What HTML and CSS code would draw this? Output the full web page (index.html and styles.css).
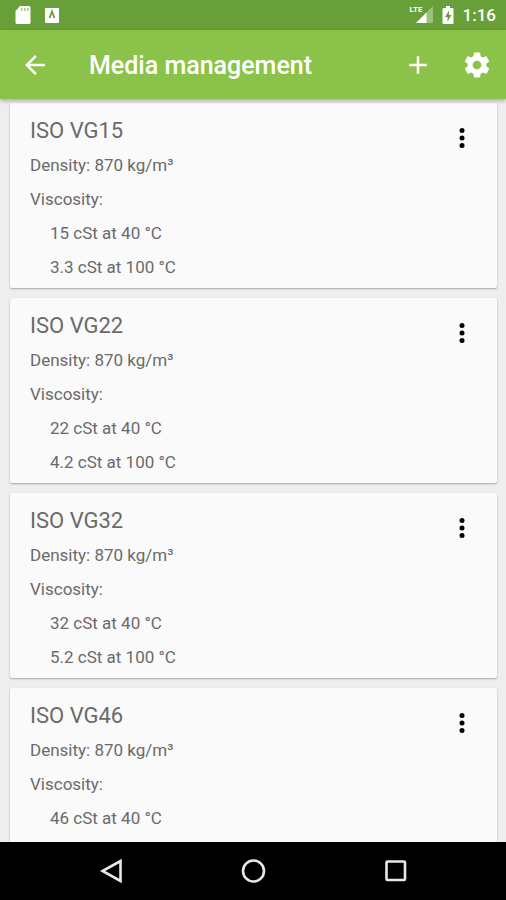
FILE: index.html
```html
<!DOCTYPE html>
<html lang="en">
<head>
<meta charset="utf-8">
<meta name="viewport" content="width=device-width, initial-scale=1">
<title>Media management</title>
<link rel="stylesheet" href="styles.css">
</head>
<body>
<div class="status-bar">
  <svg class="status-icon" viewBox="0 0 20 20" aria-hidden="true"><path fill="#fff" d="M7 1h9a1.500 1.500 0 0 1 1.500 1.500v15a1.500 1.500 0 0 1-1.500 1.500H4a1.500 1.500 0 0 1-1.500-1.500V6z"/><path fill="#a6c786" d="M8 3h1.500v3H8zm3 0h1.500v3H11zm3 0h1.500v3H14z"/></svg>
  <svg class="status-icon app-icon" viewBox="0 0 20 20" aria-hidden="true"><rect x="3" y="3" width="14" height="15" rx="1" fill="#fff"/><path d="M7.500 13L10 6.500l2.500 6.500" fill="none" stroke="#689f38" stroke-width="1.800"/></svg>
  <span class="signal"><span class="network">LTE</span><svg class="bars" viewBox="0 0 18 18" aria-hidden="true"><path fill="#fff" fill-opacity=".35" d="M18 0v17H1z"/><path fill="#fff" d="M11.500 6.500V17H1z"/></svg></span>
  <svg class="battery" viewBox="0 0 12 20" aria-hidden="true"><path fill="#fff" d="M4 1h4v2h2.500a1 1 0 0 1 1 1v14a1 1 0 0 1-1 1h-9a1 1 0 0 1-1-1V4a1 1 0 0 1 1-1H4z"/><path fill="#689f38" d="M7 5.500L3 12h2.500v4.500l4-6.500H7z"/></svg>
  <time class="clock">1:16</time>
</div>
<header class="app-bar">
  <button class="back" aria-label="Back"><svg class="icon" viewBox="0 0 24 24"><path d="M20 11H7.830l5.590-5.590L12 4l-8 8 8 8 1.410-1.410L7.830 13H20z"/></svg></button>
  <h1>Media management</h1>
  <button class="action" aria-label="Add"><svg class="icon" viewBox="0 0 24 24"><path d="M19 13h-6v6h-2v-6H5v-2h6V5h2v6h6z"/></svg></button>
  <button class="action" aria-label="Settings"><svg class="icon" viewBox="0 0 24 24"><path d="M19.430 12.980c.04-.32.07-.64.07-.98s-.03-.66-.07-.98l2.110-1.650c.19-.15.24-.42.12-.64l-2-3.460c-.12-.22-.39-.3-.61-.22l-2.490 1c-.52-.4-1.080-.73-1.690-.98l-.38-2.650C14.460 2.180 14.250 2 14 2h-4c-.25 0-.46.18-.49.42l-.38 2.650c-.61.25-1.170.59-1.690.98l-2.490-1c-.23-.09-.49 0-.61.22l-2 3.460c-.13.22-.07.49.12.64l2.110 1.650c-.04.32-.07.65-.07.98s.03.66.07.98l-2.110 1.650c-.19.15-.24.42-.12.64l2 3.460c.12.22.39.3.61.22l2.490-1c.52.4 1.080.73 1.690.98l.38 2.650c.03.24.24.42.49.42h4c.25 0 .46-.18.49-.42l.38-2.650c.61-.25 1.170-.59 1.690-.98l2.490 1c.23.09.49 0 .61-.22l2-3.460c.12-.22.07-.49-.12-.64zM12 15.500c-1.930 0-3.500-1.570-3.500-3.500s1.570-3.500 3.500-3.500 3.500 1.570 3.500 3.500-1.570 3.500-3.500 3.500z"/></svg></button>
</header>
<main class="media-list">
  <article class="card">
    <div class="details"><h2>ISO VG15</h2><p>Density: 870 kg/m³</p><p>Viscosity:</p><p class="value">15 cSt at 40 °C</p><p class="value">3.3 cSt at 100 °C</p></div>
    <button class="more" aria-label="Options for ISO VG15"><svg class="icon" viewBox="0 0 24 24"><circle cx="12" cy="6" r="2"/><circle cx="12" cy="12" r="2"/><circle cx="12" cy="18" r="2"/></svg></button>
  </article>
  <article class="card">
    <div class="details"><h2>ISO VG22</h2><p>Density: 870 kg/m³</p><p>Viscosity:</p><p class="value">22 cSt at 40 °C</p><p class="value">4.2 cSt at 100 °C</p></div>
    <button class="more" aria-label="Options for ISO VG22"><svg class="icon" viewBox="0 0 24 24"><circle cx="12" cy="6" r="2"/><circle cx="12" cy="12" r="2"/><circle cx="12" cy="18" r="2"/></svg></button>
  </article>
  <article class="card">
    <div class="details"><h2>ISO VG32</h2><p>Density: 870 kg/m³</p><p>Viscosity:</p><p class="value">32 cSt at 40 °C</p><p class="value">5.2 cSt at 100 °C</p></div>
    <button class="more" aria-label="Options for ISO VG32"><svg class="icon" viewBox="0 0 24 24"><circle cx="12" cy="6" r="2"/><circle cx="12" cy="12" r="2"/><circle cx="12" cy="18" r="2"/></svg></button>
  </article>
  <article class="card">
    <div class="details"><h2>ISO VG46</h2><p>Density: 870 kg/m³</p><p>Viscosity:</p><p class="value">46 cSt at 40 °C</p></div>
    <button class="more" aria-label="Options for ISO VG46"><svg class="icon" viewBox="0 0 24 24"><circle cx="12" cy="6" r="2"/><circle cx="12" cy="12" r="2"/><circle cx="12" cy="18" r="2"/></svg></button>
  </article>
</main>
<nav class="system-nav" aria-label="System">
  <button aria-label="Back"><svg class="nav-icon" viewBox="0 0 28 28"><path d="M23.500 4v20L5.500 14z"/></svg></button>
  <button aria-label="Home"><svg class="nav-icon" viewBox="0 0 28 28"><circle cx="14.500" cy="14" r="10.500"/></svg></button>
  <button aria-label="Recent apps"><svg class="nav-icon" viewBox="0 0 28 28"><rect x="5.500" y="4.500" width="18.500" height="18.500" rx="1"/></svg></button>
</nav>
</body>
</html>
```
FILE: styles.css
```css
* {
  box-sizing: border-box;
}

body {
  display: flex;
  flex-direction: column;
  height: 100vh;
  margin: 0;
  background: #eee;
  color: #6a6a6a;
  font-family: Roboto, "Liberation Sans", sans-serif;
}

h1,
h2,
p {
  margin: 0;
}

button {
  display: flex;
  align-items: center;
  justify-content: center;
  padding: 0;
  border: 0;
  background: none;
  color: inherit;
}

.icon {
  width: 30px;
  height: 30px;
  fill: currentColor;
}

.status-bar {
  display: flex;
  flex: none;
  align-items: center;
  height: 30px;
  padding: 0 10px 0 13px;
  background: #689f38;
  color: #fff;
}

.status-icon {
  width: 20px;
  height: 20px;
}

.app-icon {
  margin-left: 9px;
}

.signal {
  position: relative;
  display: flex;
  justify-content: flex-end;
  width: 22px;
  margin-left: auto;
}

.network {
  position: absolute;
  top: -1px;
  left: -1px;
  background: #689f38;
  font-size: 8px;
  font-weight: 700;
  line-height: 9px;
}

.bars {
  width: 18px;
  height: 18px;
}

.battery {
  width: 12px;
  height: 20px;
  margin: 0 9px;
}

.clock {
  font-size: 17px;
  font-weight: 500;
  line-height: 30px;
}

.app-bar {
  position: relative;
  display: flex;
  flex: none;
  align-items: stretch;
  height: 69px;
  background: #8bc34a;
  box-shadow: 0 2px 4px rgba(0, 0, 0, 0.28);
  color: #fff;
}

.app-bar h1 {
  flex: 1;
  padding-left: 19px;
  font-size: 25px;
  font-weight: 500;
  line-height: 72px;
}

.back {
  width: 70px;
}

.action {
  width: 59px;
}

.media-list {
  display: flex;
  flex: 1;
  flex-direction: column;
  gap: 10px;
  min-height: 0;
  padding: 4px 9px 0 10px;
  overflow: hidden;
}

.card {
  display: flex;
  flex: none;
  align-items: flex-start;
  justify-content: space-between;
  padding: 10px 20px 4px;
  border-radius: 2px;
  background: #fafafa;
  box-shadow: 0 1px 2px rgba(0, 0, 0, 0.3);
}

.card:last-child {
  padding-bottom: 20px;
}

.details h2 {
  font-size: 22px;
  font-weight: 400;
  line-height: 35px;
}

.details p {
  font-size: 17px;
  line-height: 34px;
}

.details .value {
  padding-left: 20px;
}

.more {
  height: 50px;
  color: #000;
}

.system-nav {
  z-index: 1;
  display: grid;
  flex: none;
  grid-template-columns: repeat(3, 1fr);
  height: 58px;
  padding: 0 40px;
  background: #000;
}

.nav-icon {
  width: 28px;
  height: 28px;
  fill: none;
  stroke: #e8e8e8;
  stroke-width: 2.600;
}
```
